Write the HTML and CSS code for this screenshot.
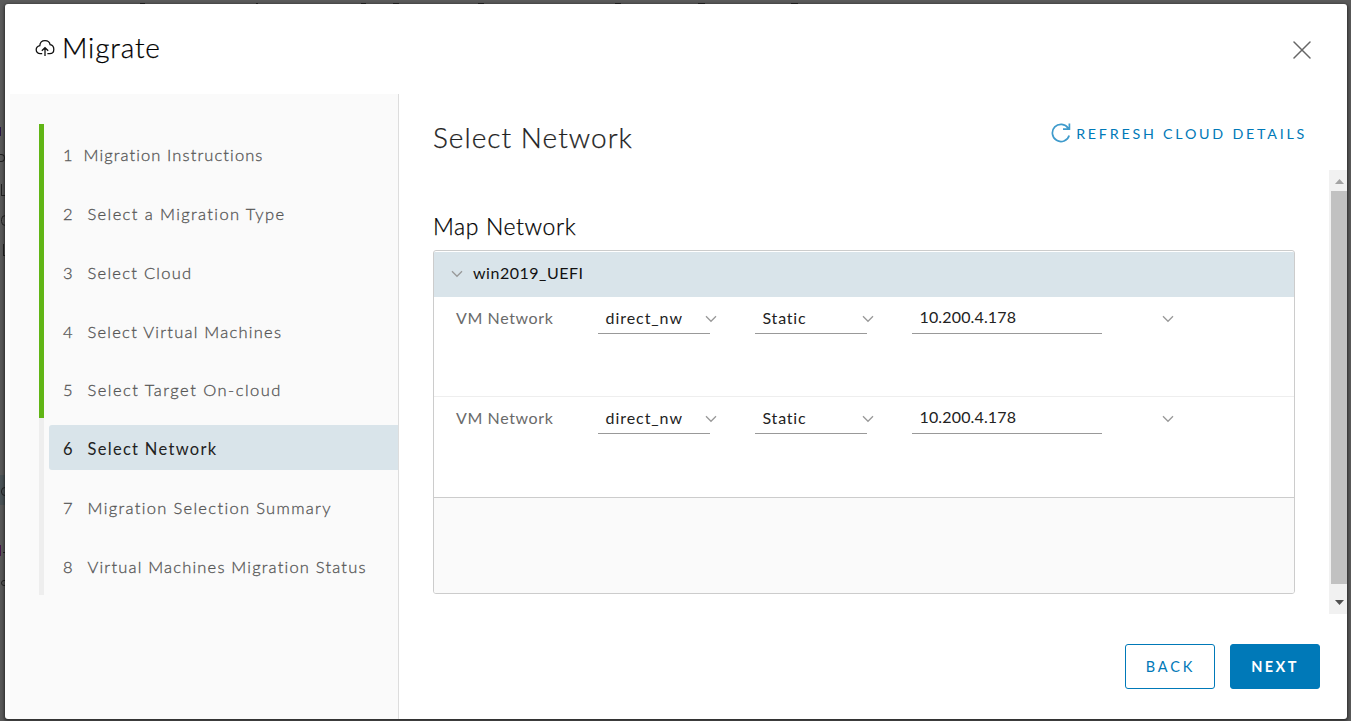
FILE: index.html
```html
<!DOCTYPE html>
<html lang="en">
<head>
<meta charset="utf-8">
<title>Migrate</title>
<link rel="stylesheet" href="styles.css">
</head>
<body>
<div class="backdrop" aria-hidden="true">
  <i class="tab t1"></i><i class="tab t2"></i><i class="tab t3"></i><i class="tab t4"></i><i class="tab t5"></i><i class="tab t6"></i><i class="tab t7"></i><i class="tab t8"></i>
  <i class="row-mark"></i>
  <i class="edge e1"></i><i class="edge e2"></i><i class="edge e3"></i><i class="edge e4"></i><i class="edge e5"></i><i class="edge e6"></i><i class="edge e7"></i><i class="edge e8"></i><i class="edge e9"></i>
</div>
<main class="dialog">
  <header class="head">
    <svg class="cloud" viewBox="0 0 20 18"><path d="M7.2 14.7H5.2C2.8 14.7 1.2 13 1.2 10.8C1.2 8.7 2.8 7.2 4.8 6.7C5 3.6 7.2 1.6 10 1.6C12.8 1.6 14.7 3.3 15.1 5.6C17.4 6 18.8 7.9 18.8 10.2C18.8 12.8 17.2 14.7 14.8 14.7H12.4M10 17V9M6.8 11.7L10 8.7L13.2 11.7"/></svg>
    <h1>Migrate</h1>
    <svg class="close" viewBox="0 0 18 18"><path d="M1 1L17 17M17 1L1 17"/></svg>
  </header>
  <div class="body">
    <nav class="side">
      <ol class="steps">
        <li class="done"><div class="step"><b>1</b><span class="s1">Migration Instructions</span></div></li>
        <li class="done"><div class="step"><b>2</b><span class="s2">Select a Migration Type</span></div></li>
        <li class="done"><div class="step"><b>3</b><span class="s3">Select Cloud</span></div></li>
        <li class="done"><div class="step"><b>4</b><span class="s4">Select Virtual Machines</span></div></li>
        <li class="done"><div class="step"><b>5</b><span class="s5">Select Target On-cloud</span></div></li>
        <li><div class="step active"><b>6</b><span class="s6">Select Network</span></div></li>
        <li><div class="step"><b>7</b><span class="s7">Migration Selection Summary</span></div></li>
        <li><div class="step"><b>8</b><span class="s8">Virtual Machines Migration Status</span></div></li>
      </ol>
    </nav>
    <section class="main">
      <div class="title">
        <h2>Select Network</h2>
        <button class="refresh"><svg viewBox="0 0 20 20"><path d="M18.2 12.5A8.6 8.6 0 1 1 17.2 5.2M18.4 0.6V6.1H12"/></svg><span>REFRESH CLOUD DETAILS</span></button>
      </div>
      <div class="scroll">
        <div class="content">
          <h3>Map Network</h3>
          <div class="grid">
            <div class="group"><svg class="chev" viewBox="0 0 12 8"><path d="M1 1.2L6 6.3L11 1.2"/></svg><span>win2019_UEFI</span></div>
            <div class="row">
              <span class="name">VM Network</span>
              <span class="field select dn">direct_nw<svg class="chev" viewBox="0 0 12 8"><path d="M1 1.2L6 6.3L11 1.2"/></svg></span>
              <span class="field select st">Static<svg class="chev" viewBox="0 0 12 8"><path d="M1 1.2L6 6.3L11 1.2"/></svg></span>
              <span class="field ip">10.200.4.178</span>
              <svg class="chev" viewBox="0 0 12 8"><path d="M1 1.2L6 6.3L11 1.2"/></svg>
            </div>
            <div class="row last">
              <span class="name">VM Network</span>
              <span class="field select dn">direct_nw<svg class="chev" viewBox="0 0 12 8"><path d="M1 1.2L6 6.3L11 1.2"/></svg></span>
              <span class="field select st">Static<svg class="chev" viewBox="0 0 12 8"><path d="M1 1.2L6 6.3L11 1.2"/></svg></span>
              <span class="field ip">10.200.4.178</span>
              <svg class="chev" viewBox="0 0 12 8"><path d="M1 1.2L6 6.3L11 1.2"/></svg>
            </div>
            <div class="foot"></div>
          </div>
        </div>
        <div class="bar">
          <svg viewBox="0 0 9 5"><path fill="#a3a3a3" d="M0 5L4.5 0L9 5Z"/></svg>
          <div class="thumb"></div>
          <svg viewBox="0 0 9 5"><path fill="#505050" d="M0 0L4.5 5L9 0Z"/></svg>
        </div>
      </div>
      <footer class="actions"><button class="btn">BACK</button><button class="btn primary">NEXT</button></footer>
    </section>
  </div>
</main>
</body>
</html>
```
FILE: styles.css
```css
* { box-sizing: border-box; }
body { margin: 0; height: 721px; overflow: hidden; background: #5a5a5a; font-family: Lato, "Open Sans", sans-serif; font-size: 16px; color: #222; position: relative; padding: 4px 4px 2px 5px; }
h1, h2, h3, ol { margin: 0; padding: 0; font-weight: 300; }
svg { display: block; fill: none; flex: none; }
button { font-family: inherit; background: none; border: 0; padding: 0; }

/* Dimmed page behind the dialog */
.backdrop { position: absolute; inset: 0; overflow: hidden; }
.tab { position: absolute; top: 3px; height: 1px; width: 5px; background: #222; }
.t1 { left: 140px; } .t2 { left: 256px; width: 2px; } .t3 { left: 361px; } .t4 { left: 393px; width: 6px; }
.t5 { left: 478px; width: 6px; } .t6 { left: 615px; width: 6px; } .t7 { left: 698px; width: 7px; } .t8 { left: 791px; width: 7px; }
.row-mark { position: absolute; left: 0; top: 475px; width: 5px; height: 30px; background: #4b5357; }
/* Clipped ends of the page's labels */
.edge { position: absolute; border: 0 solid #222; }
.e1 { left: 0; top: 127px; width: 1px; height: 9px; background: #2a1845; }
.e2 { left: 0; top: 154px; width: 5px; height: 8px; border-width: 1px 1px 1px 0; border-radius: 0 4px 4px 0; }
.e3 { left: 1px; top: 184px; width: 5px; height: 12px; border-width: 0 0 1px 1px; }
.e4 { left: 1px; top: 215px; width: 9px; height: 11px; border-width: 1px; border-radius: 5px; }
.e5 { left: 3px; top: 244px; width: 5px; height: 12px; border-width: 0 0 1px 1px; }
.e6 { left: 1px; top: 487px; width: 8px; height: 9px; border-width: 1px; border-radius: 4px; }
.e7 { left: 0; top: 545px; width: 1px; height: 11px; background: #45184a; }
.e8 { left: 3px; top: 552px; width: 2px; height: 1px; background: #222; }
.e9 { left: 1px; top: 580px; width: 8px; height: 6px; border-width: 1px; border-radius: 3px; }

.dialog { position: relative; height: 715px; background: #fff; border-radius: 3px; box-shadow: 0 1px 3px 1px rgba(0,0,0,.5); display: flex; flex-direction: column; overflow: hidden; }
.head { height: 90px; display: flex; align-items: flex-start; padding: 0 36px 0 30px; }
.cloud { width: 20px; height: 18px; margin-top: 35px; stroke: #111; stroke-width: 1.3; }
h1 { flex: 1; margin-left: 7px; margin-top: 26px; font-size: 28px; line-height: 34px; letter-spacing: .85px; color: #000; -webkit-text-stroke: .25px #000; }
.close { width: 18px; height: 18px; margin-top: 37px; stroke: #666; stroke-width: 1.5; stroke-linecap: round; }
.body { flex: 1; display: flex; min-height: 0; }

.side { width: 389.5px; margin-left: 4.5px; background: #fafafa; border-right: 1px solid #ddd; padding: 30px 0 0 29.5px; }
.steps { list-style: none; }
.steps li { height: 58.85px; border-left: 5px solid #eee; padding: 7px 0 0 5px; }
.steps li.done { border-color: #60b515; }
.step { height: 45px; border-radius: 3px 0 0 3px; padding-left: 14px; display: flex; align-items: center; font-size: 16.5px; color: #565656; white-space: nowrap; padding-top: 3px; -webkit-text-stroke: .3px #565656; }
.step b { font-weight: 300; width: 24.5px; flex: none; }
.active { background: #d9e4ea; color: #222; font-weight: 400; -webkit-text-stroke: 0; }
.active b { font-weight: 400; }
.s1 { letter-spacing: 1.1px; margin-left: -4px; }
.s2 { letter-spacing: 1.38px; } .s3 { letter-spacing: 1.27px; } .s4 { letter-spacing: 1.25px; }
.s5 { letter-spacing: 1.47px; } .s6 { letter-spacing: 1.3px; } .s7 { letter-spacing: 1.33px; } .s8 { letter-spacing: 1.19px; }

.main { flex: 1; min-width: 0; display: flex; flex-direction: column; }
.title { height: 76px; display: flex; justify-content: space-between; padding: 26px 40px 0 34px; }
h2 { font-size: 28px; line-height: 34px; letter-spacing: 1.03px; -webkit-text-stroke: .25px #222; }
.refresh { display: flex; align-items: flex-start; color: #0079b8; font-size: 14.3px; letter-spacing: 2.75px; line-height: 18px; height: 24px; }
.refresh svg { width: 20px; height: 20px; margin-top: 3px; stroke: #3f9bcc; stroke-width: 1.7; }
.refresh span { margin: 5px 0 0 5px; }
.scroll { height: 444px; display: flex; }
.content { flex: 1; padding: 40px 34px 0 34px; }
h3 { font-size: 23px; line-height: 32px; letter-spacing: .6px; color: #000; -webkit-text-stroke: .25px #000; }
.grid { margin-top: 8px; height: 344px; border: 1px solid #ccc; border-radius: 3px; overflow: hidden; padding-top: 1px; display: flex; flex-direction: column; }
.group { height: 45px; background: #d9e4ea; display: flex; align-items: center; padding-left: 17px; letter-spacing: .52px; color: #111; }
.group span { margin: -4px 0 0 10px; }
.group .chev { margin-top: -1px; }
.chev { width: 12px; height: 8px; stroke: #999; stroke-width: 1.3; }
.row { height: 100px; border-bottom: 1px solid #eee; display: flex; padding: 7px 0 0 22px; }
.row.last { height: 101px; border-bottom-color: #ccc; }
.name { width: 142px; color: #6a6a6a; letter-spacing: .6px; line-height: 27px; }
.field { height: 30px; border-bottom: 1px solid #999; padding-left: 7.5px; line-height: 27px; white-space: nowrap; }
.select { width: 112px; margin-right: 45px; display: flex; justify-content: space-between; align-items: flex-start; }
.select .chev { margin: 11px -7px 0 0; }
.dn { letter-spacing: .95px; } .st { letter-spacing: .8px; }
.ip { width: 190px; letter-spacing: .15px; line-height: 25px; margin-right: 60px; }
.row > .chev { margin-top: 11px; }
.foot { flex: 1; background: #fafafa; }
.bar { width: 18px; background: #f1f1f1; display: flex; flex-direction: column; align-items: center; }
.bar svg { width: 9px; height: 5px; margin-top: 9px; margin-left: 3px; }
.thumb { width: 16px; height: 393px; margin: 7px 0 7px 2px; background: #c1c1c1; }
.actions { display: flex; gap: 15px; justify-content: flex-end; padding: 30px 27px 0 0; }
.btn { width: 90px; height: 45px; border: 1px solid #0079b8; border-radius: 3px; color: #0079b8; font-size: 14.5px; letter-spacing: 2.9px; padding: 0 0 0 1px; }
.primary { background: #0079b8; color: #fff; font-weight: 700; letter-spacing: 2.4px; padding-left: 0; }
```
